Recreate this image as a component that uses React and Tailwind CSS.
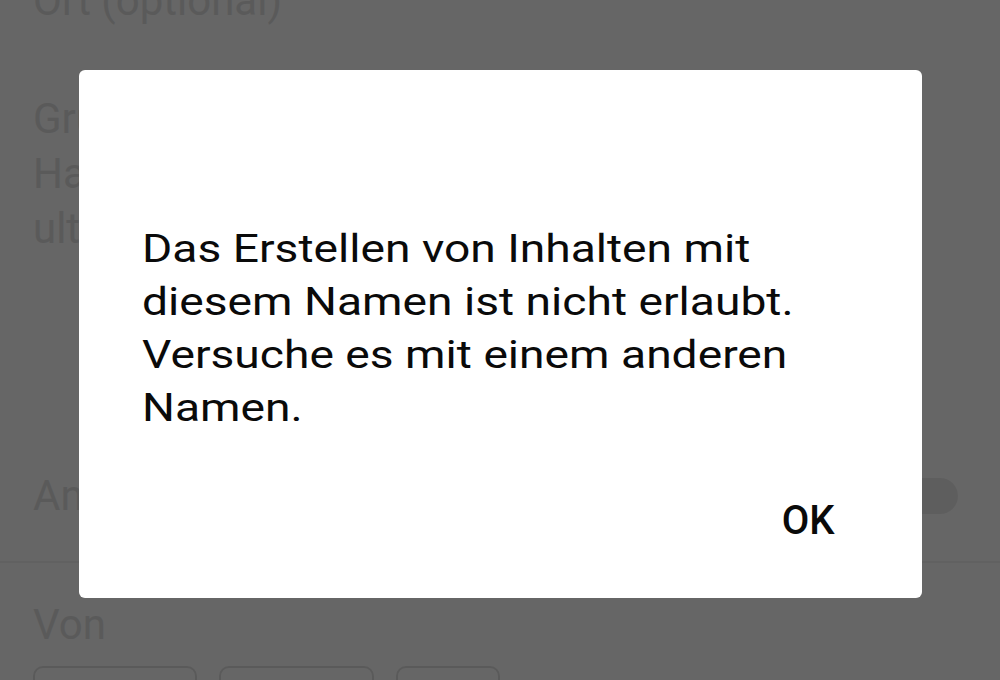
export default function App() {
  const font = { fontFamily: "Roboto, 'Noto Sans', sans-serif" };
  return (
    <div className="relative w-[1000px] h-[680px] overflow-hidden bg-white" style={font}>
      {/* underlying page */}
      <div className="flex flex-col px-[33px] text-[42px] leading-[55px] text-[#e2e2e2]">
        <div className="-mt-[27px] whitespace-nowrap">Ort (optional)</div>
        <div className="mt-[63px] whitespace-nowrap">
          <div>Gruppenbeschreibung</div>
          <div>Hallo zusammen, wir</div>
          <div>ultimatives Treffen</div>
        </div>
        <div className="mt-[212px] flex items-center justify-between">
          <span>Anzeigen</span>
          <div className="w-[58px] h-[36px] rounded-full bg-[#ececec] mr-[9px]"></div>
        </div>
      </div>
      <div className="mt-[38px] h-[2px] bg-[#f3f3f3]"></div>
      <div className="flex flex-col px-[33px] text-[42px] leading-[55px] text-[#e2e2e2]">
        <div className="mt-[34px]">Von</div>
        <div className="mt-[14px] flex gap-[22px]">
          <div className="w-[164px] h-[60px] rounded-[10px] border-2 border-[#e2e2e2]"></div>
          <div className="w-[155px] h-[60px] rounded-[10px] border-2 border-[#e2e2e2]"></div>
          <div className="w-[104px] h-[60px] rounded-[10px] border-2 border-[#e2e2e2]"></div>
        </div>
      </div>

      {/* overlay */}
      <div className="absolute inset-0 bg-black/60 flex items-start justify-center">
        <div className="mt-[70px] w-[843px] h-[528px] bg-white rounded-[6px] flex flex-col pt-[153px] pl-[63px] pr-[50px]">
          <p className="w-[590px] origin-top-left scale-x-[1.215] text-[38px] leading-[53px] text-[#0a0a0a]">
            Das Erstellen von Inhalten mit diesem Namen ist nicht erlaubt. Versuche es mit einem anderen Namen.
          </p>
          <div className="mt-[62px] flex justify-end pr-[37px]">
            <button className="text-[40px] leading-[48px] font-medium text-[#0a0a0a]">OK</button>
          </div>
        </div>
      </div>
    </div>
  );
}
